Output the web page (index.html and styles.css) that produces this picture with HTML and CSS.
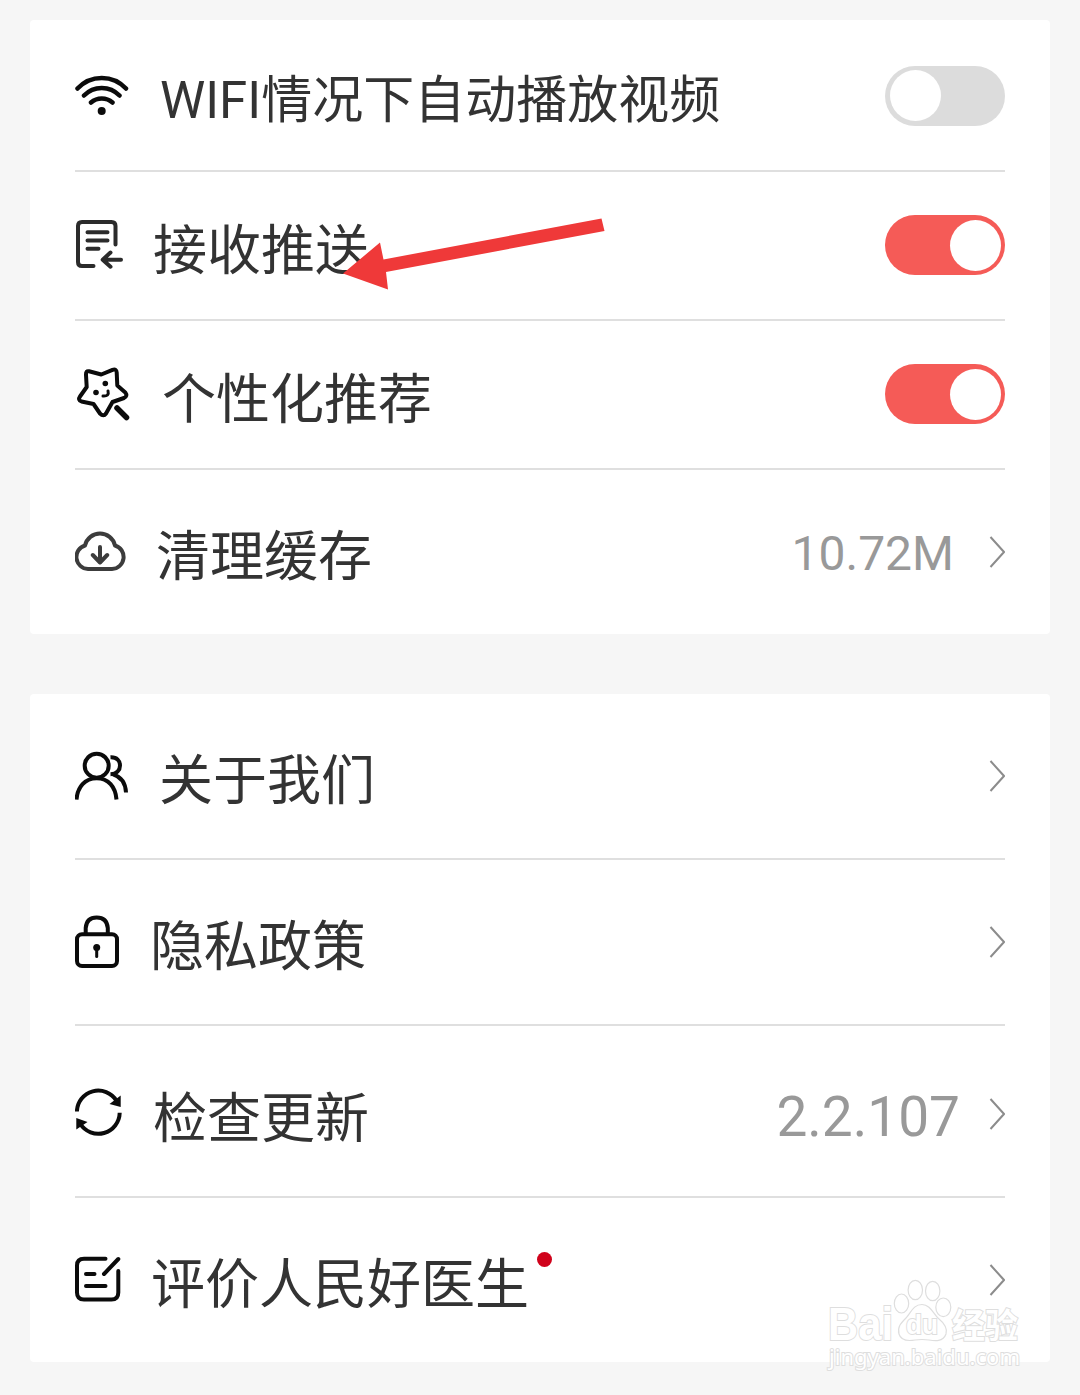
FILE: index.html
```html
<!DOCTYPE html>
<html lang="zh-CN">
<head>
<meta charset="utf-8">
<title>设置</title>
<link rel="stylesheet" href="styles.css">
</head>
<body>
<main class="page">
  <section class="card card-general">
    <div class="row">
      <svg class="icon wifi" width="85" height="60" viewBox="0 0 85 60">
        <path d="M2.500 22.500A33 33 0 0 1 51 22.500M9 29.500A24.500 24.500 0 0 1 44.500 29.500M16 36.500A16.500 16.500 0 0 1 37.500 36.500"/>
        <circle class="solid" cx="26.700" cy="45" r="4"/>
      </svg>
      <span class="label label-wifi">WIFI情况下自动播放视频</span>
      <span class="switch"></span>
    </div>
    <div class="row">
      <svg class="icon soft" width="78" height="60" viewBox="0 0 78 60">
        <path d="M40.500 28.500V10q0-4-4-4H7q-4 0-4 4v36q0 4 4 4h11.500M12.500 16.300h20M12.500 24.600h20M12.500 32.700h11M46 43.700H28M35.500 36.500l-7.800 7.200 7.800 7"/>
      </svg>
      <span class="label">接收推送</span>
      <span class="switch on"></span>
    </div>
    <div class="row">
      <svg class="icon" width="87" height="60" viewBox="0 0.500 87 60">
        <path d="M14 6.800L26.300 10 37.500 5.300Q41.500 4 41.700 8L42.300 21l8 7Q53 31.500 49 33.500L37.500 37.500l-6.500 11.500Q28.500 52.500 25 49L18.500 39.500 6.500 37Q2.500 35.500 5 32L11.700 22.500 11 10.500Q10.700 6 14 6.800Z"/>
        <path class="wand" d="M42 43.500L51.500 53"/>
        <path class="thin" d="M28 31.500Q34.500 32 33 26.500"/>
        <circle class="solid" cx="30.300" cy="19" r="2.800"/>
        <circle class="solid" cx="21" cy="28" r="2.800"/>
      </svg>
      <span class="label">个性化推荐</span>
      <span class="switch on"></span>
    </div>
    <div class="row row-tall">
      <svg class="icon cloud" width="81" height="60" viewBox="0 0 81 60">
        <path d="M13 47A12 12 0 0 1 10 23.500A15.400 15.400 0 0 1 40 23.500A12 12 0 0 1 37 47ZM25 25v15.500M17.800 33l7.200 7.500 7.200-7.500"/>
      </svg>
      <span class="label">清理缓存</span>
      <span class="value value-cache">10.72M</span>
      <svg class="chevron" width="16" height="32" viewBox="0 0 16 32"><path d="M1.500 1L15 16 1.500 31"/></svg>
    </div>
  </section>

  <section class="card">
    <div class="row row-tall">
      <svg class="icon" width="84" height="60" viewBox="0 0 84 60">
        <path class="flat" d="M1.500 53.500C2.500 41 10 32.300 21.700 32.300S40.500 41 41.500 53.500M35.500 11.300C42 11 45 15 45 19.500S42 28 35.500 28.200M38 28.300C45.500 30.500 50.500 36 51 46.500"/>
        <circle cx="21.700" cy="19.700" r="12"/>
      </svg>
      <span class="label">关于我们</span>
      <svg class="chevron" width="16" height="32" viewBox="0 0 16 32"><path d="M1.500 1L15 16 1.500 31"/></svg>
    </div>
    <div class="row row-tall">
      <svg class="icon" width="75" height="60" viewBox="0 0 75 60">
        <rect x="2" y="22.300" width="40" height="31.700" rx="5"/>
        <path d="M10.700 22V16Q11.500 5.500 21.700 5.500T32.800 16V22"/>
        <circle class="solid" cx="21.700" cy="35.500" r="3.500"/>
        <path class="thin" d="M21.700 36v8.500"/>
      </svg>
      <span class="label">隐私政策</span>
      <svg class="chevron" width="16" height="32" viewBox="0 0 16 32"><path d="M1.500 1L15 16 1.500 31"/></svg>
    </div>
    <div class="row row-update">
      <svg class="icon" width="78" height="60" viewBox="0 2.500 78 60">
        <path class="flat" d="M1.900 30A21.400 21.400 0 0 1 41.500 19.300M44.700 31.300A21.400 21.400 0 0 1 5.200 42.300"/>
        <path class="solid" d="M45.700 14V25.500L34.500 22.500ZM1.300 36.500V48L12.500 40.500Z"/>
      </svg>
      <span class="label">检查更新</span>
      <span class="value value-version">2.2.107</span>
      <svg class="chevron" width="16" height="32" viewBox="0 0 16 32"><path d="M1.500 1L15 16 1.500 31"/></svg>
    </div>
    <div class="row row-tall">
      <svg class="icon" width="76" height="60" viewBox="0 0 76 60">
        <path d="M30.500 8.800H9Q2 8.800 2 15.500V42.500Q2 49.500 9 49.500H36.500Q43.300 49.500 43.300 42.500V21M43.300 9L29 24M11 24h8.500M11 36h19.500"/>
      </svg>
      <span class="label">评价人民好医生<i class="dot"></i></span>
      <svg class="chevron" width="16" height="32" viewBox="0 0 16 32"><path d="M1.500 1L15 16 1.500 31"/></svg>
    </div>
  </section>

  <svg class="pointer" width="264" height="74" viewBox="0 0 264 74">
    <path d="M0 55.500L37 24.500L40.500 41.500L258.500 0.500L261.500 13L43 54L45 71.500Z"/>
  </svg>

  <svg class="watermark" width="200" height="100" viewBox="0 0 200 100">
    <g class="wm-text">
      <text class="wm-bai" x="3" y="65" textLength="65" lengthAdjust="spacingAndGlyphs">Bai</text>
      <text class="wm-cjk" x="127" y="63" textLength="66" lengthAdjust="spacingAndGlyphs">经验</text>
      <text class="wm-url" x="4" y="90" textLength="191" lengthAdjust="spacingAndGlyphs">jingyan.baidu.com</text>
    </g>
    <g class="wm-paw">
      <ellipse cx="76.500" cy="28.500" rx="7.200" ry="9.500"/>
      <ellipse cx="90.300" cy="15" rx="7.200" ry="9.700"/>
      <ellipse cx="107.700" cy="16" rx="7.200" ry="9.700"/>
      <ellipse cx="118.300" cy="32.300" rx="7.500" ry="9.300"/>
      <path d="M97 29.500C105 29.500 108 38 113 43C119 48 123 53 121 59C118 67 110 66 104 65Q97 64 90 65C84 66 76 66 74 59C72 52 76 48 81 43C86 38 88 29.500 97 29.500Z"/>
    </g>
    <g class="wm-text"><text class="wm-du" x="81" y="59" textLength="32" lengthAdjust="spacingAndGlyphs">du</text></g>
  </svg>
</main>
</body>
</html>
```
FILE: styles.css
```css
* {
  box-sizing: border-box;
}

body {
  margin: 0;
  background: #f6f6f6;
  color: #333;
  font-family: Roboto, "Noto Sans CJK SC", sans-serif;
}

.page {
  position: relative;
  display: flex;
  flex-direction: column;
  gap: 60px;
  height: 1395px;
  padding: 20px 30px 0;
  overflow: hidden;
}

.card {
  padding: 0 45px;
  background: #fff;
  border-radius: 4px;
}

.card-general {
  padding-top: 1px;
}

.row {
  display: flex;
  align-items: center;
  height: 149px;
  border-bottom: 2px solid #dfdfdf;
}

.card-general .row:first-child {
  height: 151px;
}

.row-tall {
  height: 166px;
}

.row-update {
  height: 172px;
  padding-top: 5px;
}

.row:last-child {
  height: 164px;
  border-bottom: 0;
}

.icon {
  flex: none;
  fill: none;
  stroke: #0b0b0b;
  stroke-width: 4;
  stroke-linecap: round;
  stroke-linejoin: round;
}

.wifi {
  stroke-width: 4.5;
}

.soft {
  stroke: #2b2b2b;
}

.cloud {
  stroke: #3c3c3c;
}

.icon .flat {
  stroke-linecap: butt;
}

.icon .thin {
  stroke-width: 3;
}

.icon .wand {
  stroke-width: 5.5;
}

.icon .solid {
  fill: #0b0b0b;
  stroke: none;
}

.label {
  position: relative;
  padding-top: 12px;
  font-size: 54px;
  line-height: 80px;
  white-space: nowrap;
}

.label-wifi {
  padding-top: 10px;
  font-size: 51px;
}

.dot {
  position: absolute;
  top: 18px;
  right: -23px;
  width: 15px;
  height: 15px;
  border-radius: 50%;
  background: #d0021b;
}

.switch {
  display: flex;
  flex: none;
  width: 120px;
  height: 60px;
  margin-left: auto;
  padding: 4.5px;
  border-radius: 30px;
  background: #dcdcdc;
}

.switch::before {
  content: "";
  width: 51px;
  height: 51px;
  border-radius: 50%;
  background: #fff;
}

.switch.on {
  justify-content: flex-end;
  margin-bottom: 1px;
  background: #f55b57;
}

.value {
  margin-left: auto;
  color: #999;
  line-height: 60px;
}

.value-cache {
  padding-top: 3px;
  font-size: 48px;
}

.value-version {
  padding-top: 6px;
  font-size: 55px;
}

.chevron {
  flex: none;
  margin-left: auto;
  fill: none;
  stroke: #8c8c8c;
  stroke-width: 2;
}

.value + .chevron {
  margin-left: 35px;
}

.value-version + .chevron {
  margin-left: 29px;
}

.pointer {
  position: absolute;
  left: 343px;
  top: 218px;
  fill: #ef3939;
}

.watermark {
  position: absolute;
  left: 825px;
  top: 1275px;
}

.wm-text {
  fill: #fff;
  stroke: #dedede;
  stroke-width: 2;
  paint-order: stroke;
}

.wm-paw {
  fill: #fff;
  stroke: #dedede;
  stroke-width: 1.2;
}

.wm-bai {
  font: bold 46px "Liberation Sans", sans-serif;
}

.wm-cjk {
  font: bold 34px "Noto Sans CJK SC", sans-serif;
}

.wm-du {
  font: bold 28px "Liberation Sans", sans-serif;
}

.wm-url {
  font: 22px "Noto Sans", sans-serif;
}
```
